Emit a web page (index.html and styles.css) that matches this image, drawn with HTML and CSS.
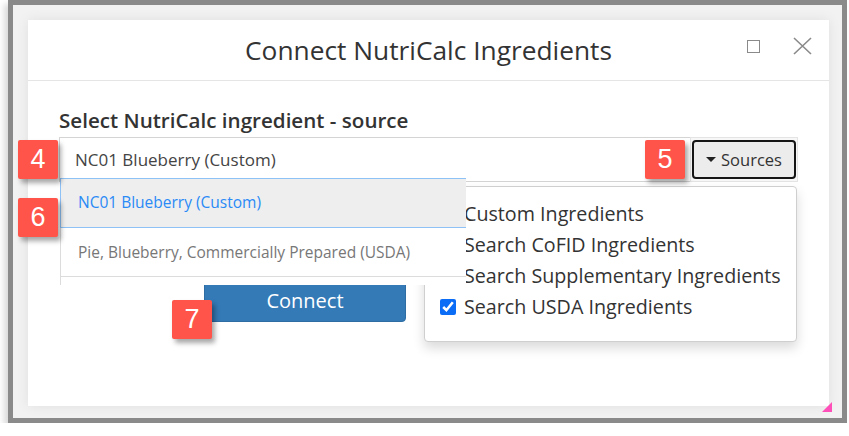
FILE: index.html
```html
<!DOCTYPE html>
<html>

<head>
    <link rel="stylesheet" href="styles.css">
</head>

<body>
    <div class="frame">
        <div class="dialog">
            <div class="header">
                <h1 class="title">Connect NutriCalc Ingredients</h1>
                <div class="win-btns">
                    <span class="max-btn"></span>
                    <svg class="close-btn" width="19" height="18" viewBox="0 0 19 18">
                        <path d="M1 1 L18 17 M18 1 L1 17" stroke="#8a8a8a" stroke-width="1.6" fill="none"/>
                    </svg>
                </div>
            </div>

            <div class="content">
                <div class="label">Select NutriCalc ingredient - source</div>

                <div class="input-group">
                    <div class="search-input">NC01 Blueberry (Custom)</div>
                    <div class="btn-wrap">
                        <button class="sources-btn"><span class="caret"></span>Sources</button>
                    </div>
                </div>

                <button class="connect-btn">Connect</button>
            </div>

            <!-- autocomplete results -->
            <ul class="results">
                <li class="active">NC01 Blueberry (Custom)</li>
                <li>Pie, Blueberry, Commercially Prepared (USDA)</li>
            </ul>

            <!-- sources menu -->
            <ul class="sources-menu">
                <li><input type="checkbox"> Custom Ingredients</li>
                <li><input type="checkbox"> Search CoFID Ingredients</li>
                <li><input type="checkbox"> Search Supplementary Ingredients</li>
                <li><input type="checkbox" checked> Search USDA Ingredients</li>
            </ul>

            <span class="badge b4">4</span>
            <span class="badge b5">5</span>
            <span class="badge b6">6</span>
            <span class="badge b7">7</span>

            <svg class="grip" width="12" height="12" viewBox="0 0 12 12">
                <path d="M11 1 L11 11 L1 11 Z" fill="#ff4fb8"/>
            </svg>
        </div>
    </div>
</body>

</html>
```

FILE: styles.css
```css
body {
    margin: 0;
    background-color: #fff;
    font-family: "Open Sans", Arial, sans-serif;
    color: #333;
}

.frame {
    margin-left: 8px;
    width: 839px;
    height: 423px;
    box-sizing: border-box;
    border: 5px solid #8a8a8a;
    background-color: #f2f2f2;
    padding: 15px 13px 12px 15px;
    box-shadow: -4px 4px 6px rgba(0, 0, 0, 0.15);
}

.dialog {
    position: relative;
    width: 801px;
    height: 386px;
    background-color: #fff;
    box-shadow: 0 0 12px rgba(0, 0, 0, 0.08);
}

.header {
    height: 60px;
    border-bottom: 1px solid #e5e5e5;
    display: flex;
    align-items: center;
    justify-content: center;
    position: relative;
}

.title {
    margin: 0;
    font-size: 26.3px;
    font-weight: normal;
    color: #333;
}

.win-btns {
    position: absolute;
    right: 17px;
    top: 17px;
    display: flex;
    align-items: center;
    gap: 33px;
}

.max-btn {
    display: inline-block;
    width: 11px;
    height: 11px;
    border: 1.5px solid #8a8a8a;
}

.content {
    padding: 0 31px;
}

.label {
    margin-top: 28px;
    font-size: 20.6px;
    font-weight: 600;
    color: #333;
    line-height: 22px;
}

.input-group {
    display: flex;
    margin-top: 6px;
    height: 45px;
}

.search-input {
    flex: 1;
    border: 1px solid #d4d4d4;
    border-right: none;
    padding: 0 15px;
    font-size: 17px;
    line-height: 43px;
    color: #444;
}

.btn-wrap {
    width: 108px;
    background-color: #f7f7f7;
    border: 1px solid #e4e4e4;
    display: flex;
    align-items: center;
    justify-content: center;
    box-sizing: border-box;
}

.sources-btn {
    width: 104px;
    height: 39px;
    border: 2px solid #151515;
    border-radius: 4px;
    background-color: #ececec;
    font-family: "Open Sans", Arial, sans-serif;
    font-size: 16.5px;
    color: #333;
    display: flex;
    align-items: center;
    justify-content: center;
    gap: 5px;
    padding: 0;
}

.caret {
    width: 0;
    height: 0;
    border-left: 5px solid transparent;
    border-right: 5px solid transparent;
    border-top: 5px solid #222;
}

.connect-btn {
    display: block;
    margin: 96px 0 0 145px;
    width: 202px;
    height: 44px;
    background-color: #337ab7;
    border: 1px solid #2e6da4;
    border-radius: 4px;
    color: #fff;
    font-family: "Open Sans", Arial, sans-serif;
    font-size: 20px;
    padding: 0;
}

.results {
    position: absolute;
    left: 32px;
    top: 158px;
    width: 406px;
    height: 107px;
    margin: 0;
    padding: 0;
    list-style: none;
    background-color: #fff;
    border-left: 1px solid #dcdcdc;
    box-sizing: border-box;
    z-index: 2;
}

.results li {
    height: 48px;
    line-height: 48px;
    padding-left: 17px;
    font-size: 15.5px;
    color: #777;
    border-bottom: 1px solid #dcdcdc;
}

.results li.active {
    background-color: #eee;
    color: #2a8af6;
    border: 1px solid #8ec1f5;
    border-right: none;
    margin-left: -1px;
    line-height: 47px;
}

.sources-menu {
    position: absolute;
    left: 396px;
    top: 166px;
    width: 373px;
    height: 156px;
    box-sizing: border-box;
    margin: 0;
    padding: 11px 0 0 15px;
    list-style: none;
    background-color: #fff;
    border: 1px solid #cfcfcf;
    border-radius: 4px;
    box-shadow: 0 6px 12px rgba(0, 0, 0, 0.15);
    z-index: 1;
}

.sources-menu li {
    height: 31px;
    display: flex;
    align-items: center;
    font-size: 19.7px;
    color: #333;
    white-space: nowrap;
}

.sources-menu input {
    width: 16px;
    height: 16px;
    margin: 0 8px 0 0;
    accent-color: #0b6cf5;
}

.badge {
    position: absolute;
    width: 40px;
    height: 39px;
    background-color: #ff5449;
    color: #fff;
    font-family: "Liberation Sans", Arial, sans-serif;
    font-size: 27px;
    line-height: 39px;
    text-align: center;
    border-radius: 2px;
    box-shadow: 3px 4px 5px rgba(0, 0, 0, 0.35);
    z-index: 3;
}

.b4 { left: -10px; top: 120px; }
.b5 { left: 617px; top: 120px; }
.b6 { left: -10px; top: 178px; }
.b7 { left: 144px; top: 280px; }

.grip {
    position: absolute;
    right: -4px;
    bottom: -7px;
}
```
